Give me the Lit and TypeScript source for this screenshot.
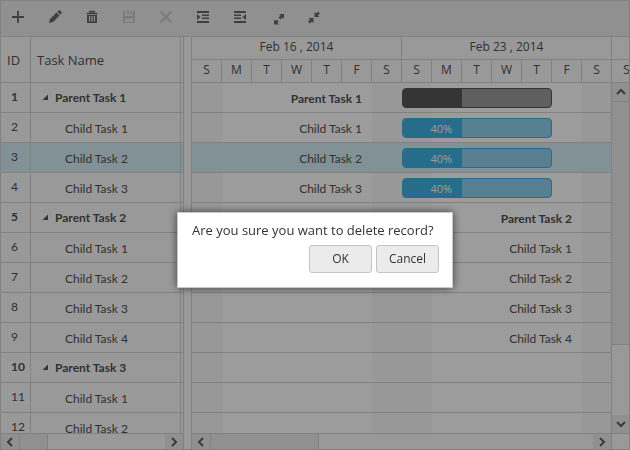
import { LitElement, html, svg, css } from "lit";
import { customElement } from "lit/decorators.js";
import { classMap } from "lit/directives/class-map.js";
import { styleMap } from "lit/directives/style-map.js";

const DAY = 30;

interface Task {
  id: number;
  name: string;
  parent?: boolean;
  selected?: boolean;
  start?: number;
  days?: number;
  progress?: number;
}

const tasks: Task[] = [
  { id: 1, name: "Parent Task 1", parent: true, start: 7, days: 5, progress: 40 },
  { id: 2, name: "Child Task 1", start: 7, days: 5, progress: 40 },
  { id: 3, name: "Child Task 2", start: 7, days: 5, progress: 40, selected: true },
  { id: 4, name: "Child Task 3", start: 7, days: 5, progress: 40 },
  { id: 5, name: "Parent Task 2", parent: true, start: 14 },
  { id: 6, name: "Child Task 1", start: 14 },
  { id: 7, name: "Child Task 2", start: 14 },
  { id: 8, name: "Child Task 3", start: 14 },
  { id: 9, name: "Child Task 4", start: 14 },
  { id: 10, name: "Parent Task 3", parent: true },
  { id: 11, name: "Child Task 1" },
  { id: 12, name: "Child Task 2" },
];

const tools = [
  { label: "Add", art: svg`<path d="M8 2v12M2 8h12" stroke="currentColor" stroke-width="1.800" fill="none"/>` },
  { label: "Edit", art: svg`<path d="M2 14l1-4 6.500-6.500 3 3L6 13zM10.300 2.700l1.200-1.200q.7-.5 1.400 0l1.600 1.600q.5.700 0 1.400l-1.200 1.200z" fill="currentColor"/>` },
  { label: "Delete", art: svg`<path d="M6 4V2.500h4V4M2.500 4.500h11" stroke="currentColor" stroke-width="1.500" fill="none"/><path fill-rule="evenodd" d="M3 6h10v7.500q0 .5-.5.500h-9q-.5 0-.5-.5zM5 7v5.500h1.200V7zM7.400 7v5.500h1.200V7zM9.800 7v5.500H11V7z" fill="currentColor"/>` },
  { label: "Save", off: true, art: svg`<path fill-rule="evenodd" d="M2 2h2v5h8V2h1l1 1v11H2zM4 9.500V13h8V9.500z" fill="currentColor"/><path d="M6 2h2v3H6zM9.500 2H11v4H9.500z" fill="currentColor"/>` },
  { label: "Cancel edit", off: true, art: svg`<path d="M2.500 2.500l11 11M13.500 2.500l-11 11" stroke="currentColor" stroke-width="1.800" fill="none"/>` },
  { label: "Indent", art: svg`<path d="M2 2h12v2H2zM7 5.500h7v1.500H7zM7 8.500h7v1.500H7zM2 12h12v2H2zM2 5l3.500 3L2 11z" fill="currentColor"/>` },
  { label: "Outdent", art: svg`<path d="M2 2h12v2H2zM2 5.500h7v1.500H2zM2 8.500h7v1.500H2zM2 12h12v2H2zM14 5l-3.500 3 3.500 3z" fill="currentColor"/>` },
  { label: "Expand all", art: svg`<path d="M10 5h5v5l-1.600-1.600-2 2-1.800-1.800 2-2zM5 10.500v5h5l-1.600-1.600 1.400-1.400-1.800-1.800-1.400 1.400z" fill="currentColor"/>` },
  { label: "Collapse all", art: svg`<path d="M8.500 3v5h5l-1.600-1.600 2-2-1.800-1.800-2 2zM2.500 9h5v5l-1.600-1.600-2 2-1.800-1.800 2-2z" fill="currentColor"/>` },
];

const weeks = ["Feb 16 , 2014", "Feb 23 , 2014"];
const days = ["S", "M", "T", "W", "T", "F", "S"];
const scaleDays = [...days, ...days, "S"];

const chevrons: Record<string, string> = {
  left: "M8 2L4 6l4 4",
  right: "M4 2l4 4-4 4",
  up: "M2 8l4-4 4 4",
  down: "M2 4l4 4 4-4",
};

const arrow = (dir: string, label: string) => html`
  <button class="arrow" aria-label=${label}>
    <svg width="12" height="12" viewBox="0 0 12 12">
      <path d=${chevrons[dir]} fill="none" stroke="currentColor" stroke-width="2" />
    </svg>
  </button>
`;

@customElement("task-grid")
class TaskGrid extends LitElement {
  static styles = css`
    :host {
      display: block;
      overflow: hidden;
    }
    table {
      width: 100%;
      table-layout: fixed;
      border-collapse: separate;
      border-spacing: 0;
    }
    .id-col {
      width: 30px;
    }
    .edge-col {
      width: 2px;
    }
    th,
    td {
      box-sizing: border-box;
      padding: 0;
      border: 0 solid var(--line);
      border-width: 0 1px 1px 0;
      white-space: nowrap;
      overflow: hidden;
    }
    .edge {
      border-right: 0;
    }
    th {
      height: 46px;
      padding-left: 6px;
      font-size: 13px;
      font-weight: 400;
      text-align: left;
    }
    td {
      height: 30px;
      font-family: var(--row-font);
      line-height: 20px;
    }
    .id {
      padding: 0 0 2px 10px;
    }
    .child {
      padding: 3px 0 0 34px;
    }
    .parent {
      font-weight: 700;
    }
    .selected td {
      background: var(--selected);
    }
    .toggle {
      display: inline-block;
      width: 6px;
      height: 6px;
      padding: 0;
      margin: 0 7px 2px 11px;
      border: 0;
      vertical-align: middle;
      background: #555;
      clip-path: polygon(100% 0, 100% 100%, 0 100%);
    }
  `;

  render() {
    return html`
      <table>
        <colgroup>
          <col class="id-col" />
          <col />
          <col class="edge-col" />
        </colgroup>
        <thead>
          <tr>
            <th>ID</th>
            <th>Task Name</th>
            <td class="edge"></td>
          </tr>
        </thead>
        <tbody>
          ${tasks.map(
            (t) => html`
              <tr class=${classMap({ parent: !!t.parent, selected: !!t.selected })}>
                <td class="id">${t.id}</td>
                <td class=${classMap({ child: !t.parent })}>
                  ${t.parent ? html`<button class="toggle" aria-label="Collapse"></button>` : ""}${t.name}
                </td>
                <td class="edge"></td>
              </tr>
            `
          )}
        </tbody>
      </table>
    `;
  }
}

@customElement("task-chart")
class TaskChart extends LitElement {
  static styles = css`
    :host {
      display: flex;
      flex-direction: column;
      overflow: hidden;
    }
    .scale {
      flex: none;
      width: 450px;
      table-layout: fixed;
      border-collapse: separate;
      border-spacing: 0;
    }
    .scale th {
      box-sizing: border-box;
      height: 23px;
      padding: 0 0 2px;
      border: 0 solid var(--line);
      border-width: 0 1px 1px 0;
      font-size: 12px;
      font-weight: 400;
      line-height: 18px;
    }
    .body {
      flex: 1;
      min-height: 0;
      display: flex;
    }
    .rows {
      flex: 1;
      min-width: 0;
      overflow: hidden;
      background: repeating-linear-gradient(
        90deg,
        #f9f9f9 0 30px,
        #ffffff 30px 180px,
        #f9f9f9 180px 210px
      );
    }
    .row {
      display: flex;
      align-items: center;
      box-sizing: border-box;
      height: 30px;
      border-bottom: 1px solid var(--line);
    }
    .row.selected {
      background: var(--selected);
    }
    .label {
      box-sizing: border-box;
      flex: none;
      padding: 2px 40px 0 0;
      font-family: var(--row-font);
      text-align: right;
      line-height: 20px;
    }
    .parent .label {
      font-weight: 700;
    }
    .bar {
      box-sizing: border-box;
      height: 20px;
      border: 1px solid #40b1e2;
      border-radius: 4px;
      background: #90d0ef;
      overflow: hidden;
    }
    .done {
      box-sizing: border-box;
      height: 100%;
      padding-right: 10px;
      background: #40b1e2;
      color: #fff;
      font-size: 11px;
      line-height: 20px;
      text-align: right;
    }
    .parent .bar {
      border-color: #585858;
      background: #9b9b9b;
    }
    .parent .done {
      background: #585858;
    }
    .vscroll {
      box-sizing: border-box;
      width: 18px;
      display: flex;
      flex-direction: column;
      border-left: 1px solid var(--line);
      background: var(--panel);
    }
    .vscroll .arrow {
      height: 18px;
    }
    .vthumb {
      flex: 242;
      border: 1px solid var(--line);
      border-width: 1px 0;
      background: var(--bar);
    }
    .vtrack {
      flex: 70;
    }
    .arrow {
      display: flex;
      align-items: center;
      justify-content: center;
      padding: 0;
      border: 0;
      background: var(--bar);
      color: #606060;
    }
  `;

  render() {
    return html`
      <table class="scale">
        <colgroup>
          ${scaleDays.map(() => html`<col />`)}
        </colgroup>
        <thead>
          <tr>
            ${weeks.map((w) => html`<th colspan="7">${w}</th>`)}
            <th></th>
          </tr>
          <tr>
            ${scaleDays.map((d) => html`<th>${d}</th>`)}
          </tr>
        </thead>
      </table>
      <div class="body">
        <div class="rows">
          ${tasks.map(
            (t) => html`
              <div class=${classMap({ row: true, parent: !!t.parent, selected: !!t.selected })}>
                ${t.start
                  ? html`<div class="label" style=${styleMap({ width: `${t.start * DAY}px` })}>${t.name}</div>`
                  : ""}
                ${t.days
                  ? html`<div class="bar" style=${styleMap({ width: `${t.days * DAY}px` })}>
                      <div class="done" style=${styleMap({ width: `${t.progress}%` })}>
                        ${t.parent ? "" : `${t.progress}%`}
                      </div>
                    </div>`
                  : ""}
              </div>
            `
          )}
        </div>
        <div class="vscroll">
          ${arrow("up", "Scroll up")}
          <div class="vthumb"></div>
          <div class="vtrack"></div>
          ${arrow("down", "Scroll down")}
        </div>
      </div>
    `;
  }
}

@customElement("app-root")
class AppRoot extends LitElement {
  static styles = css`
    :host {
      --line: #d3d3d3;
      --bar: #ebebeb;
      --panel: #fbfbfb;
      --selected: #d5edf5;
      --row-font: Lato, "Open Sans", sans-serif;
      display: flex;
      flex-direction: column;
      box-sizing: border-box;
      height: 100vh;
      border: 1px solid var(--line);
      background: var(--panel);
      color: #505050;
      font: 12px "Open Sans", "Noto Sans", sans-serif;
    }
    .toolbar {
      display: flex;
      flex: none;
      box-sizing: border-box;
      height: 36px;
      border-bottom: 1px solid var(--line);
      background: var(--bar);
    }
    .tool {
      display: flex;
      justify-content: center;
      width: 37px;
      padding: 8px 4px 0 1px;
      border: 0;
      background: none;
      color: #686868;
    }
    .tool.off {
      color: #c8c8c8;
    }
    .panes {
      flex: 1;
      min-height: 0;
      display: flex;
    }
    .pane {
      display: flex;
      flex-direction: column;
      min-width: 0;
    }
    .left {
      flex: none;
      width: 182px;
    }
    .right {
      flex: 1;
    }
    .splitter {
      flex: none;
      width: 7px;
      border: 1px solid var(--line);
      border-width: 0 1px;
    }
    .view {
      flex: 1;
      min-height: 0;
    }
    .hscroll {
      flex: none;
      display: flex;
      height: 15px;
      border-top: 1px solid var(--line);
    }
    .arrow {
      display: flex;
      flex: none;
      align-items: center;
      justify-content: center;
      width: 18px;
      padding: 0;
      border: 0;
      background: var(--bar);
      color: #606060;
    }
    .thumb {
      border: 1px solid var(--line);
      border-width: 0 1px;
      background: var(--bar);
    }
    .left .thumb {
      flex: 27;
    }
    .left .track {
      flex: 117;
    }
    .right .thumb {
      flex: 107;
    }
    .right .track {
      flex: 275;
    }
    .corner {
      box-sizing: border-box;
      flex: none;
      width: 18px;
      border-left: 1px solid var(--line);
    }
    .backdrop {
      position: fixed;
      inset: 0;
      display: flex;
      align-items: center;
      justify-content: center;
      padding-top: 50px;
      background: rgba(0, 0, 0, 0.39);
    }
    .dialog {
      display: flex;
      flex-direction: column;
      box-sizing: border-box;
      width: 276px;
      gap: 5px;
      padding: 7px 13px 14px 14px;
      border: 1px solid #c8c8c8;
      background: #fff;
      box-shadow: 0 0 8px rgba(0, 0, 0, 0.6);
      color: #333;
    }
    .question {
      margin: 0;
      font-size: 13px;
      line-height: 20px;
      white-space: nowrap;
    }
    .actions {
      display: flex;
      justify-content: flex-end;
      gap: 4px;
    }
    .action {
      width: 63px;
      height: 28px;
      padding: 0 0 2px;
      border: 1px solid #c4c4c4;
      border-radius: 3px;
      background: #ebebeb;
      color: #333;
      font: inherit;
    }
  `;

  render() {
    return html`
      <div class="toolbar" role="toolbar" aria-label="Task actions">
        ${tools.map(
          (t) => html`
            <button class=${classMap({ tool: true, off: !!t.off })} aria-label=${t.label} ?disabled=${!!t.off}>
              <svg width="16" height="16" viewBox="0 0 16 16">${t.art}</svg>
            </button>
          `
        )}
      </div>
      <div class="panes">
        <div class="pane left">
          <task-grid class="view"></task-grid>
          <div class="hscroll">
            ${arrow("left", "Scroll tasks left")}
            <div class="thumb"></div>
            <div class="track"></div>
            ${arrow("right", "Scroll tasks right")}
          </div>
        </div>
        <div class="splitter"></div>
        <div class="pane right">
          <task-chart class="view"></task-chart>
          <div class="hscroll">
            ${arrow("left", "Scroll chart left")}
            <div class="thumb"></div>
            <div class="track"></div>
            ${arrow("right", "Scroll chart right")}
            <div class="corner"></div>
          </div>
        </div>
      </div>
      <div class="backdrop">
        <div class="dialog" role="alertdialog" aria-modal="true" aria-labelledby="question">
          <p class="question" id="question">Are you sure you want to delete record?</p>
          <div class="actions">
            <button class="action">OK</button>
            <button class="action">Cancel</button>
          </div>
        </div>
      </div>
    `;
  }
}
